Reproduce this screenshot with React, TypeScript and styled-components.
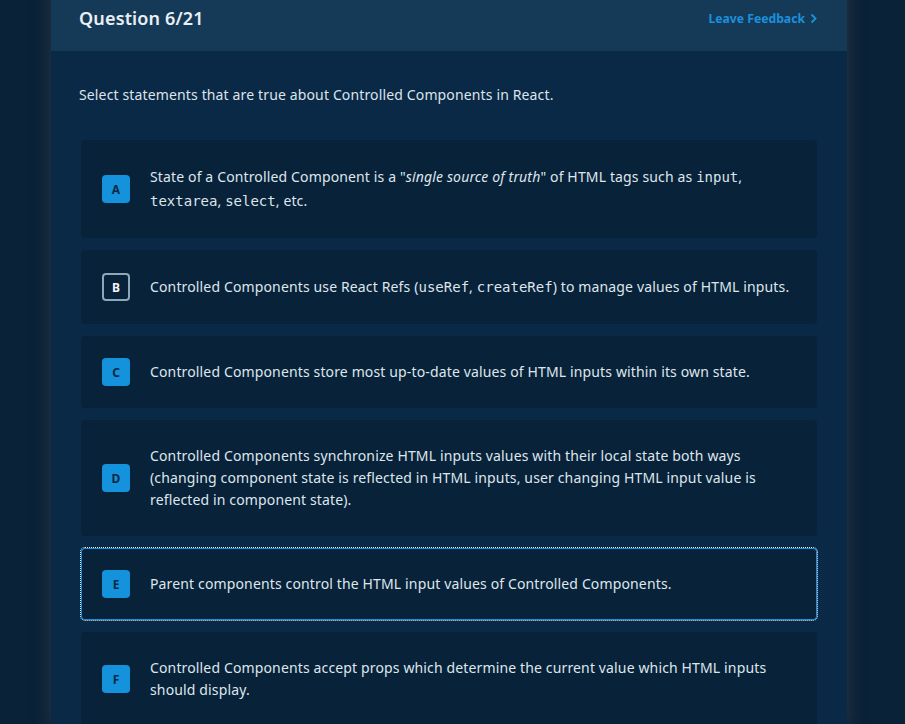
import React from "react";
import styled, { createGlobalStyle, css } from "styled-components";

const Global = createGlobalStyle`
  html, body { margin: 0; padding: 0; background: #0a2238; }
  body { font-family: "Noto Sans", "Open Sans", sans-serif; overflow: hidden; }
  * { box-sizing: border-box; }
`;

const Page = styled.div`
  display: flex;
  padding-left: 51px;
  min-height: 724px;
  background: #0a2238;
`;

const Panel = styled.main`
  width: 796px;
  margin-top: -20px;
  background: #0a2946;
  box-shadow: 0 0 14px 2px rgba(60, 64, 70, 0.55);
  display: flex;
  flex-direction: column;
`;

const Header = styled.header`
  background: #153a58;
  padding: 0 30px 19px 28px;
  display: flex;
  flex-direction: column;
`;

const Subtitle = styled.div`
  font-size: 13px;
  line-height: 18px;
  color: #8fa6b8;
  height: 24px;
  padding-top: 1px;
  white-space: nowrap;
  overflow: hidden;
`;

const TitleRow = styled.div`
  display: flex;
  align-items: center;
  justify-content: space-between;
  height: 28px;
`;

const Title = styled.h1`
  margin: 0;
  font-size: 18px;
  font-weight: 600;
  letter-spacing: 0.15px;
  color: #e9eff4;
  line-height: 28px;
`;

const Feedback = styled.a`
  display: flex;
  align-items: center;
  gap: 5px;
  font-size: 12.2px;
  font-weight: 700;
  color: #1c90dc;
  text-decoration: none;
  cursor: pointer;
  svg { display: block; }
`;

const Body = styled.section`
  padding: 33px 30px 0 28px;
  display: flex;
  flex-direction: column;
`;

const Intro = styled.p`
  margin: 0 0 34px;
  font-size: 14px;
  line-height: 22px;
  letter-spacing: 0.14px;
  color: #dde4ea;
`;

const Options = styled.div`
  display: flex;
  flex-direction: column;
  gap: 12px;
  padding-left: 2px;
`;

const Card = styled.div<{ $focused?: boolean }>`
  display: flex;
  align-items: center;
  gap: 20px;
  padding: 22px 22px 22px 21px;
  background: #08223a;
  border-radius: 4px;
  ${(p) =>
    p.$focused &&
    css`
      box-shadow: inset 0 0 0 1px #1c90dc;
      outline: 1px dotted #e8eef3;
      outline-offset: 0px;
    `}
`;

const Badge = styled.div<{ $outlined?: boolean }>`
  flex: none;
  width: 28px;
  height: 28px;
  border-radius: 4px;
  display: flex;
  align-items: center;
  justify-content: center;
  font-size: 12px;
  font-weight: 700;
  ${(p) =>
    p.$outlined
      ? css`
          border: 2px solid #8ea7b9;
          color: #f2f5f8;
          background: transparent;
        `
      : css`
          background: #1592dc;
          color: #0a2946;
        `}
`;

const Text = styled.div<{ $tall?: boolean }>`
  padding: 3px 0;
  font-size: 14px;
  line-height: ${(p) => (p.$tall ? "24px" : "22px")};
  letter-spacing: 0.14px;
  color: #dfe6ec;
  em { font-style: italic; }
`;

const Code = styled.code`
  font-family: "DejaVu Sans Mono", monospace;
  font-size: 14px;
  letter-spacing: 0;
  line-height: 1;
  color: #dde4ea;
`;

const Chevron = () => (
  <svg width="7" height="11" viewBox="0 0 7 11" fill="none">
    <path d="M1.5 1.5 L5.5 5.5 L1.5 9.5" stroke="#1c90dc" strokeWidth="1.8" />
  </svg>
);

export default function App() {
  return (
    <>
      <Global />
      <Page>
        <Panel>
          <Header>
            <Subtitle>Test your knowledge of controlled components, forms and state handling in modern React.</Subtitle>
            <TitleRow>
              <Title>Question 6/21</Title>
              <Feedback>
                Leave Feedback
                <Chevron />
              </Feedback>
            </TitleRow>
          </Header>
          <Body>
            <Intro>Select statements that are true about Controlled Components in React.</Intro>
            <Options>
              <Card>
                <Badge>A</Badge>
                <Text $tall>
                  State of a Controlled Component is a "<em>single source of truth</em>" of HTML tags such as{" "}
                  <Code>input</Code>, <Code>textarea</Code>, <Code>select</Code>, etc.
                </Text>
              </Card>
              <Card>
                <Badge $outlined>B</Badge>
                <Text $tall>
                  Controlled Components use React Refs (<Code>useRef</Code>, <Code>createRef</Code>) to manage values of
                  HTML inputs.
                </Text>
              </Card>
              <Card>
                <Badge>C</Badge>
                <Text>Controlled Components store most up-to-date values of HTML inputs within its own state.</Text>
              </Card>
              <Card>
                <Badge>D</Badge>
                <Text>
                  Controlled Components synchronize HTML inputs values with their local state both ways (changing
                  component state is reflected in HTML inputs, user changing HTML input value is reflected in component
                  state).
                </Text>
              </Card>
              <Card $focused>
                <Badge>E</Badge>
                <Text>Parent components control the HTML input values of Controlled Components.</Text>
              </Card>
              <Card>
                <Badge>F</Badge>
                <Text>
                  Controlled Components accept props which determine the current value which HTML inputs should
                  display.
                </Text>
              </Card>
            </Options>
          </Body>
        </Panel>
      </Page>
    </>
  );
}
